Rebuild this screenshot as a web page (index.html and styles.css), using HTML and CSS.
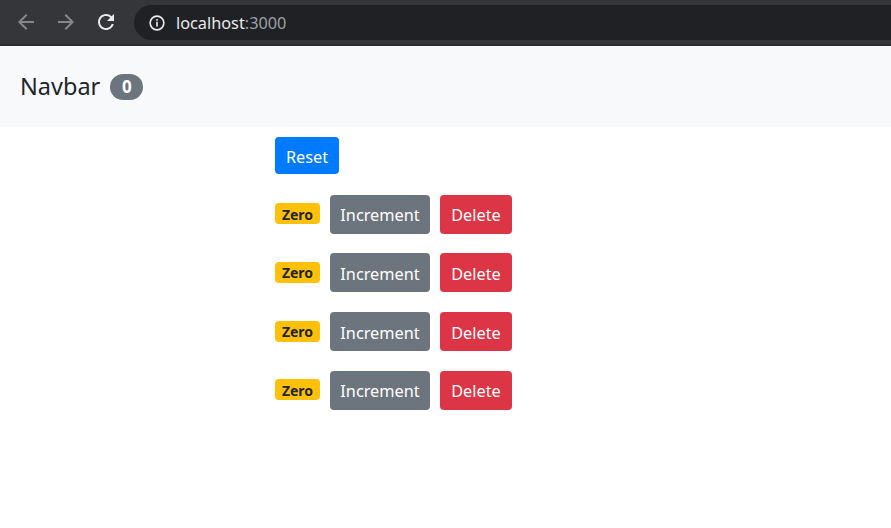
FILE: index.html
```html
<!DOCTYPE html>
<html>
<head>
<meta charset="utf-8">
<link rel="stylesheet" href="styles.css">
</head>
<body>
<div class="chrome">
  <div class="nav-icons">
    <svg class="ico dim" viewBox="0 0 24 24" width="24" height="24"><path d="M20 11H7.83l5.59-5.59L12 4l-8 8 8 8 1.41-1.41L7.83 13H20v-2z" fill="currentColor"/></svg>
    <svg class="ico dim" viewBox="0 0 24 24" width="24" height="24"><path d="M4 11h12.17l-5.59-5.59L12 4l8 8-8 8-1.41-1.41L16.17 13H4v-2z" fill="currentColor"/></svg>
    <svg class="ico" viewBox="0 0 24 24" width="24" height="24"><path d="M17.65 6.35A7.958 7.958 0 0 0 12 4c-4.420 0-7.99 3.58-7.99 8s3.570 8 7.99 8c3.73 0 6.84-2.55 7.73-6h-2.08A5.99 5.99 0 0 1 12 18c-3.31 0-6-2.69-6-6s2.69-6 6-6c1.66 0 3.14.69 4.22 1.78L13 11h7V4l-2.35 2.35z" fill="currentColor"/></svg>
  </div>
  <div class="omnibox">
    <svg class="info" viewBox="0 0 20 20" width="18" height="18"><circle cx="10" cy="10" r="7.6" fill="none" stroke="currentColor" stroke-width="1.8"/><rect x="9.1" y="8.6" width="1.8" height="5.4" fill="currentColor"/><rect x="9.1" y="5.6" width="1.8" height="1.8" fill="currentColor"/></svg>
    <span class="host">localhost</span><span class="port">:3000</span>
  </div>
</div>
<div class="chrome-line"></div>
<nav class="navbar">
  <span class="brand">Navbar <span class="pill">0</span></span>
</nav>
<main class="main">
  <button class="btn btn-primary reset">Reset</button>
  <div class="rows">
    <div class="row"><span class="badge">Zero</span><button class="btn btn-secondary inc">Increment</button><button class="btn btn-danger del">Delete</button></div>
    <div class="row"><span class="badge">Zero</span><button class="btn btn-secondary inc">Increment</button><button class="btn btn-danger del">Delete</button></div>
    <div class="row"><span class="badge">Zero</span><button class="btn btn-secondary inc">Increment</button><button class="btn btn-danger del">Delete</button></div>
    <div class="row"><span class="badge">Zero</span><button class="btn btn-secondary inc">Increment</button><button class="btn btn-danger del">Delete</button></div>
  </div>
</main>
</body>
</html>
```
FILE: styles.css
```css
* { box-sizing: border-box; }
html, body { margin: 0; padding: 0; background: #fff; }
body { font-family: "Noto Sans", "Open Sans", "Liberation Sans", sans-serif; color: #212529; }

.chrome {
  height: 44px;
  background: #35363a;
  display: flex;
  align-items: center;
}
.chrome-line { height: 2px; background: #2a2b2e; }
.nav-icons {
  display: flex;
  align-items: center;
  gap: 16px;
  padding-left: 14px;
  width: 134px;
}
.ico { color: #e8eaed; display: block; }
.ico.dim { color: #85878a; }
.omnibox {
  flex: 1;
  height: 35px;
  margin-top: 1px;
  background: #202124;
  border-radius: 18px 0 0 18px;
  display: flex;
  align-items: center;
  padding-left: 14px;
  font-family: "Noto Sans", "Open Sans", sans-serif;
  font-size: 16.3px;
}
.info { color: #e8eaed; margin-right: 10px; display: block; }
.host { color: #e8eaed; }
.port { color: #9aa0a6; }

.navbar {
  height: 81px;
  background: #f8f9fa;
  display: flex;
  align-items: center;
  padding-left: 20px;
}
.brand {
  font-size: 23.5px;
  color: #212529;
  display: flex;
  align-items: center;
  gap: 10px;
  margin-top: -2px;
}
.pill {
  background: #6c757d;
  color: #fff;
  font-weight: 700;
  font-size: 17px;
  border-radius: 13px;
  width: 33px;
  height: 26px;
  display: inline-flex;
  align-items: center;
  justify-content: center;
  margin-top: 2px;
}

.main {
  padding: 10px 0 0 275px;
}
.btn {
  font-family: inherit;
  font-size: 16.3px;
  border: none;
  border-radius: 4px;
  color: #fff;
  height: 38px;
  padding: 2px 0 0;
  display: inline-flex;
  align-items: center;
  justify-content: center;
  cursor: pointer;
}
.btn-primary { background: #007bff; }
.btn-secondary { background: #6c757d; }
.btn-danger { background: #dc3545; }
.reset { width: 64px; height: 37px; display: flex; }
.rows {
  margin-top: 21px;
  display: flex;
  flex-direction: column;
  gap: 20px;
}
.row {
  display: flex;
  align-items: center;
  height: 38.667px;
}
.badge {
  background: #ffc107;
  color: #212529;
  font-weight: 700;
  font-size: 14px;
  width: 45px;
  height: 21px;
  border-radius: 4px;
  display: inline-flex;
  align-items: center;
  justify-content: center;
  padding-top: 1px;
  margin-top: -1px;
}
.inc { width: 100px; margin-left: 10px; height: 39px; }
.del { width: 72px; margin-left: 10px; height: 39px; }
```
